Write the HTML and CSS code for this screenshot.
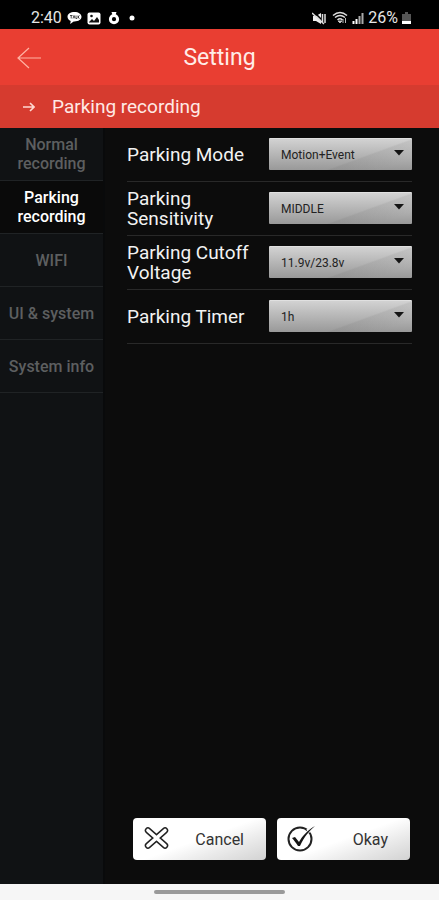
FILE: index.html
```html
<!DOCTYPE html>
<html lang="en">
<head>
<meta charset="utf-8">
<meta name="viewport" content="width=device-width, initial-scale=1">
<title>Setting</title>
<link rel="stylesheet" href="styles.css">
</head>
<body>
<div class="status">
  <div class="status-group">
    <span class="clock">2:40</span>
    <svg width="15" height="14" viewBox="0 0 15 14"><path d="M7.500 1C3.500 1 .5 3 .5 5.800c0 1.900 1.300 3.300 3.200 4.100L3.200 13l3.500-2.500h.8c4 0 7-2 7-4.700S11.500 1 7.500 1z" fill="#fff"/><path d="M3 4.500h2.500M4.200 4.500v3M6 7.500l1-3 1 3M9 4.500v3h1M11 4.500v3M12.500 4.500L11 6l1.500 1.500" stroke="#222" stroke-width=".8" fill="none"/></svg>
    <svg width="14" height="13" viewBox="0 0 14 13"><rect x=".5" y=".5" width="13" height="12" rx="2" fill="#fff"/><path d="M2 10l3-3 2 2 3-4 2 3v2.500H2z" fill="#111"/><circle cx="4.500" cy="4" r="1.300" fill="#111"/></svg>
    <svg class="ring" width="12" height="14" viewBox="0 0 12 14"><circle cx="6" cy="8.200" r="3.600" fill="none" stroke="#fff" stroke-width="3"/><path d="M3.500 1h5L7.500 4h-3z" fill="#fff"/></svg>
    <svg class="dot" width="6" height="6" viewBox="0 0 6 6"><circle cx="3" cy="3" r="2.500" fill="#fff"/></svg>
  </div>
  <div class="status-group right">
    <svg width="14" height="13" viewBox="0 0 14 13"><path d="M1 4h3l5-3v11L4 9H1z" fill="#eee"/><path d="M2 0l10 10" stroke="#000" stroke-width="1.500"/><path d="M0 1l12 11M10.500 2v9M13 2v9" stroke="#ddd" stroke-width="1.500"/></svg>
    <svg width="16" height="14" viewBox="0 0 16 14"><path d="M1 4.500q7-6 14 0M3 6.500q5-4 10 0M5.500 9q2.500-2.500 5 0" fill="none" stroke="#ddd" stroke-width="1.500"/><path d="M6 10h4l-2 2zM11 12V8M13.500 7v5" fill="#ddd" stroke="#bbb"/></svg>
    <svg width="12" height="13" viewBox="0 0 12 13"><path d="M1.500 9v3M4.500 7v5" stroke="#fff" stroke-width="2"/><path d="M7.500 4v8M10.500 1v11" stroke="#aaa" stroke-width="2"/></svg>
    <span class="clock">26%</span>
    <svg width="9" height="13" viewBox="0 0 9 13"><path d="M3 0h3v2h3v7H0V2h3z" fill="#555"/><path d="M0 9h9v3H0z" fill="#fff"/></svg>
  </div>
</div>
<header class="header">
  <button class="back" type="button" aria-label="Back"><svg width="24" height="22" viewBox="0 0 24 22"><path d="M24 11H1M12 1L1 11l11 10" fill="none" stroke="#ffb3a4" stroke-width="1.200"/></svg></button>
  <h1>Setting</h1>
</header>
<div class="crumb">
  <svg width="12" height="10" viewBox="0 0 12 10"><path d="M0 5h11M7 1l4 4-4 4" fill="none" stroke="#ffd9d2" stroke-width="1.600"/></svg>
  <h2>Parking recording</h2>
</div>
<div class="content">
  <nav class="tabs">
    <a href="#normal">Normal<br>recording</a>
    <a href="#parking" class="active" aria-current="page">Parking<br>recording</a>
    <a href="#wifi">WIFI</a>
    <a href="#ui">UI &amp; system</a>
    <a href="#info">System info</a>
  </nav>
  <main class="main">
    <form class="form">
      <div class="row"><label for="mode">Parking Mode</label>
        <div class="pick"><select id="mode"><option>Motion+Event</option></select><svg class="caret" width="10" height="6" viewBox="0 0 10 6"><path d="M0 0h10L5 5.500z" fill="#151515"/></svg></div></div>
      <div class="row"><label for="sens">Parking Sensitivity</label>
        <div class="pick"><select id="sens"><option>MIDDLE</option></select><svg class="caret" width="10" height="6" viewBox="0 0 10 6"><path d="M0 0h10L5 5.500z" fill="#151515"/></svg></div></div>
      <div class="row"><label for="volt">Parking Cutoff Voltage</label>
        <div class="pick"><select id="volt"><option>11.9v/23.8v</option></select><svg class="caret" width="10" height="6" viewBox="0 0 10 6"><path d="M0 0h10L5 5.500z" fill="#151515"/></svg></div></div>
      <div class="row"><label for="timer">Parking Timer</label>
        <div class="pick"><select id="timer"><option>1h</option></select><svg class="caret" width="10" height="6" viewBox="0 0 10 6"><path d="M0 0h10L5 5.500z" fill="#151515"/></svg></div></div>
    </form>
    <div class="actions">
      <button type="button"><svg width="28" height="28" viewBox="0 0 28 28"><g stroke-linecap="round"><path d="M5 5.500l17 15M22 5.500l-17 15" stroke="#222" stroke-width="6.500"/><path d="M5 5.500l17 15M22 5.500l-17 15" stroke="#fff" stroke-width="3.600"/></g></svg><span>Cancel</span></button>
      <button type="button"><svg width="28" height="28" viewBox="0 0 28 28"><circle cx="13" cy="14" r="11.500" fill="none" stroke="#222" stroke-width="2"/><path d="M20 6l4-1" stroke="#f7f7f7" stroke-width="4"/><path d="M5 13l3-1 4 5C16 10 21 5 28 1c-6 5-11 11-15 20h-2C9 18 7 15 5 13z" fill="#151515"/></svg><span>Okay</span></button>
    </div>
  </main>
</div>
<footer class="gesture"><span></span></footer>
</body>
</html>
```
FILE: styles.css
```css
* { box-sizing: border-box; }
body {
  margin: 0;
  min-height: 100vh;
  display: flex;
  flex-direction: column;
  background: #0c0c0c;
  color: #f2f2f2;
  font-family: Roboto, "Liberation Sans", sans-serif;
}
h1, h2 { margin: 0; font-weight: 400; }
svg { display: block; flex: none; }
button { border: 0; padding: 0; font: inherit; }

.status {
  height: 29px;
  padding: 7px 28px 0 31px;
  display: flex;
  justify-content: space-between;
  background: #000;
}
.status-group { display: flex; align-items: center; gap: 5px; }
.clock { font-size: 16px; line-height: 20px; color: #e6e6e6; }
.status-group.right { gap: 4px; }
.right svg:first-child { margin-right: 2px; }
.ring { margin-left: 2px; }
.dot { margin-left: 4px; }

.header {
  height: 56px;
  display: grid;
  grid-template-columns: 1fr auto 1fr;
  align-items: center;
  padding: 2px 17px 0;
  background: #e93e32;
}
.header h1 { font-size: 23px; line-height: 28px; color: #ffece8; }
.back { background: none; justify-self: start; }
.crumb {
  height: 43px;
  padding: 0 23px;
  display: flex;
  align-items: center;
  gap: 17px;
  background: #d63b2f;
}
.crumb h2 { font-size: 19px; line-height: 24px; color: #ffe9e5; }

.content { flex: 1; display: flex; }
.tabs {
  width: 105px;
  flex: none;
  background: #101214;
  border-right: 2px solid #090a0b;
}
.tabs a {
  height: 53px;
  display: flex;
  align-items: center;
  justify-content: center;
  text-align: center;
  border-bottom: 1px solid #202325;
  font-size: 16px;
  line-height: 19px;
  font-weight: 500;
  color: #5d5f60;
  text-decoration: none;
}
.tabs .active { background: #0a0a0a; color: #fff; }

.main {
  flex: 1;
  display: flex;
  flex-direction: column;
  justify-content: space-between;
  padding: 0 27px 24px 22px;
}
.row {
  min-height: 54px;
  display: flex;
  align-items: center;
  justify-content: space-between;
  border-bottom: 1px solid #292929;
}
.row label { width: 136px; font-size: 19px; line-height: 20px; }
.pick { position: relative; width: 143px; margin-bottom: 2px; }
.pick select {
  appearance: none;
  display: block;
  width: 100%;
  height: 32px;
  padding: 2px 28px 0 12px;
  border: 0;
  border-top: 1px solid #e0e0e0;
  border-radius: 1px;
  background:
    linear-gradient(160deg, transparent 62%, rgba(90, 90, 90, .1) 64%, transparent 85%),
    linear-gradient(#d2d2d2, #999);
  font-family: inherit;
  font-size: 12px;
  color: #222;
}
.caret { position: absolute; right: 8px; top: 12px; pointer-events: none; }

.actions { display: flex; gap: 11px; padding: 0 2px 0 6px; }
.actions button {
  flex: 1;
  height: 42px;
  padding: 0 22px 0 10px;
  display: flex;
  align-items: center;
  justify-content: space-between;
  border-radius: 4px;
  background: linear-gradient(160deg, #fff 50%, #ececec 70%, #d2d2d2);
  font-size: 16px;
  color: #333;
}

.gesture {
  height: 16px;
  display: flex;
  align-items: center;
  justify-content: center;
  background: #f6f6f6;
}
.gesture span { width: 30%; height: 4px; border-radius: 2px; background: #9a9a9a; }
```
